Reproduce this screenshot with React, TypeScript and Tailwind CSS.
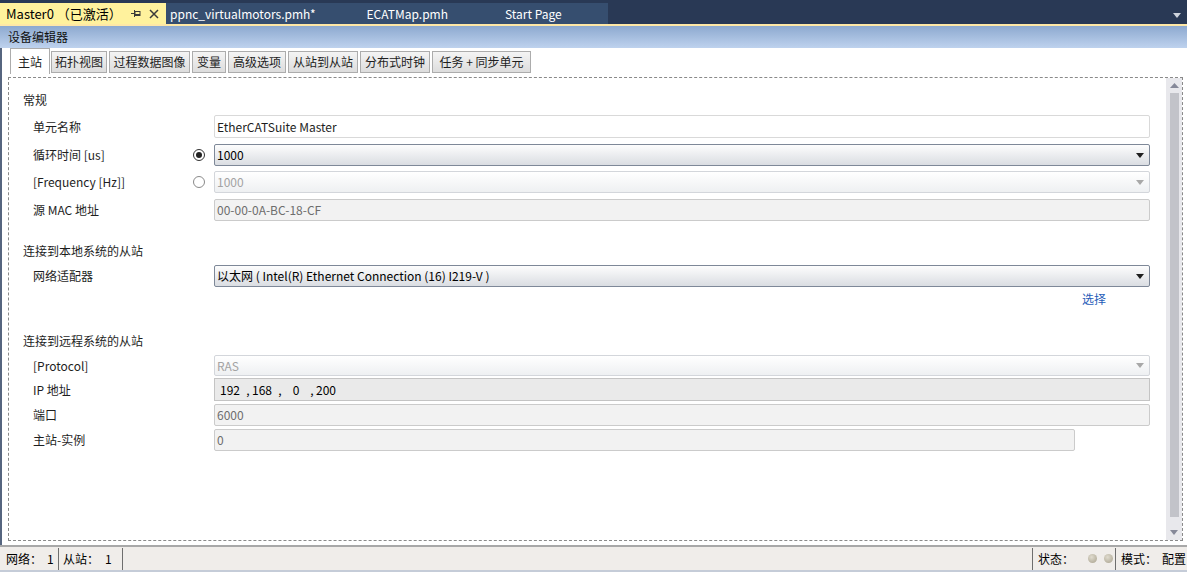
import React from 'react';

const Tri = ({ color = '#1f1f1f' }: { color?: string }) => (
  <svg width="8" height="5" viewBox="0 0 8 5">
    <path d="M0 0H8L4 5Z" fill={color} />
  </svg>
);

function Radio({ checked }: { checked: boolean }) {
  return (
    <div
      className={
        checked
          ? 'w-[12px] h-[12px] rounded-full border border-[#333333] bg-white flex items-center justify-center'
          : 'w-[12px] h-[12px] rounded-full border border-[#8a8a8a] bg-white'
      }
    >
      {checked && <div className="w-[6px] h-[6px] rounded-full bg-[#222222]" />}
    </div>
  );
}

function Label({ children }: { children: React.ReactNode }) {
  return <div className="w-[170px] pl-[10px] flex items-center leading-none">{children}</div>;
}

const tabs: { t: string; w: string; ml: string }[] = [
  { t: '拓扑视图', w: 'w-[56px]', ml: 'ml-[1px]' },
  { t: '过程数据图像', w: 'w-[81px]', ml: 'ml-[2px]' },
  { t: '变量', w: 'w-[34px]', ml: 'ml-[2px]' },
  { t: '高级选项', w: 'w-[58px]', ml: 'ml-[2px]' },
  { t: '从站到从站', w: 'w-[70px]', ml: 'ml-[2px]' },
  { t: '分布式时钟', w: 'w-[70px]', ml: 'ml-[2px]' },
  { t: '任务 + 同步单元', w: 'w-[99px]', ml: 'ml-[2px]' },
];

export default function App() {
  return (
    <div className="w-[1187px] h-[572px] flex flex-col overflow-hidden bg-[#293955] font-['Noto_Sans_CJK_SC','Noto_Sans',sans-serif] text-[12px] text-[#1e1e1e]">
      {/* document tab bar */}
      <div className="h-[24px] flex items-end relative">
        <div className="h-[21px] w-[166px] bg-[#FFF29D] flex items-center pl-[6px] text-[13px] text-[#000000] leading-none">
          <span>Master0 （已激活）</span>
          <svg className="ml-[9px]" width="10" height="9" viewBox="0 0 10 9">
            <path d="M0 4.5H3M3.5 1V8" stroke="#3a3a3a" strokeWidth="1" fill="none" />
            <rect x="4" y="2.5" width="5" height="4" fill="none" stroke="#3a3a3a" strokeWidth="1" />
            <path d="M4 5.5H9" stroke="#3a3a3a" strokeWidth="1" />
          </svg>
          <svg className="ml-[8px]" width="10" height="10" viewBox="0 0 10 10">
            <path d="M1 1L9 9M9 1L1 9" stroke="#3a3a3a" strokeWidth="1.5" />
          </svg>
        </div>
        <div className="h-[21px] w-[442px] bg-[#364E6F] flex items-center text-[12px] text-white leading-none">
          <span className="ml-[4px]">ppnc_virtualmotors.pmh*</span>
          <span className="ml-[51px]">ECATMap.pmh</span>
          <span className="ml-[57px]">Start Page</span>
        </div>
        <div className="flex-1" />
        <div className="absolute right-[6px] top-[13px]">
          <Tri color="#CED4DD" />
        </div>
      </div>
      <div className="h-[2px] bg-[#FFE8A6]" />
      {/* editor header */}
      <div className="h-[22px] bg-linear-to-b from-[#8DA9CF] to-[#BED2EE] flex items-center pl-[8px] leading-none text-[#111111]">
        设备编辑器
      </div>
      {/* content */}
      <div className="flex-1 bg-white border-l-[2px] border-[#56657F] pl-[6px] pr-[4px] flex flex-col">
        {/* tabs */}
        <div className="h-[26px] flex items-start pl-[2px]">
          <div className="w-[40px] h-[26px] bg-white border border-b-0 border-[#ACACAC] flex items-center justify-center leading-none">
            主站
          </div>
          {tabs.map((tb) => (
            <div
              key={tb.t}
              className={`${tb.w} ${tb.ml} mt-[3px] h-[22px] bg-linear-to-b from-[#F4F4F4] to-[#DDDDDD] border border-[#ACACAC] flex items-center justify-center leading-none`}
            >
              {tb.t}
            </div>
          ))}
        </div>
        {/* dashed panel */}
        <div className="mt-[3px] h-[464px] border border-dashed border-[#8A8A8A] flex">
          <div className="flex-1 flex flex-col pl-[14px] pr-[16px]">
            <div className="mt-[12px] h-[20px] flex items-center leading-none">常规</div>

            <div className="mt-[5px] h-[23px] flex">
              <Label>单元名称</Label>
              <div className="w-[21px]" />
              <div className="flex-1 border border-[#D9D9D9] rounded-[2px] bg-white flex items-center pl-[2px] leading-none">
                EtherCATSuite Master
              </div>
            </div>

            <div className="mt-[6px] h-[22px] flex">
              <Label>循环时间 [us]</Label>
              <div className="w-[21px] flex items-center">
                <Radio checked />
              </div>
              <div className="flex-1 border border-[#7E8898] rounded-[2px] bg-linear-to-b from-[#FDFDFD] to-[#DADDE2] flex items-center pl-[2px] pr-[5px] leading-none text-[#000000]">
                <span className="flex-1">1000</span>
                <Tri />
              </div>
            </div>

            <div className="mt-[5px] h-[22px] flex">
              <Label>[Frequency [Hz]]</Label>
              <div className="w-[21px] flex items-center">
                <Radio checked={false} />
              </div>
              <div className="flex-1 border border-[#D3D6DB] rounded-[2px] bg-linear-to-b from-[#FFFFFF] to-[#EEF0F2] flex items-center pl-[2px] pr-[5px] leading-none text-[#A3A3A3]">
                <span className="flex-1">1000</span>
                <Tri color="#A8A8A8" />
              </div>
            </div>

            <div className="mt-[6px] h-[22px] flex">
              <Label>源 MAC 地址</Label>
              <div className="w-[21px]" />
              <div className="flex-1 border border-[#CBCBCB] rounded-[2px] bg-[#F2F2F2] flex items-center pl-[2px] leading-none text-[#6D6D6D]">
                00-00-0A-BC-18-CF
              </div>
            </div>

            <div className="mt-[20px] h-[20px] flex items-center leading-none">连接到本地系统的从站</div>

            <div className="mt-[4px] h-[22px] flex">
              <Label>网络适配器</Label>
              <div className="w-[21px]" />
              <div className="flex-1 border border-[#7E8898] rounded-[2px] bg-linear-to-b from-[#FDFDFD] to-[#DADDE2] flex items-center pl-[2px] pr-[5px] leading-none text-[#000000]">
                <span className="flex-1">以太网 ( Intel(R) Ethernet Connection (16) I219-V )</span>
                <Tri />
              </div>
            </div>

            <div className="mt-[2px] h-[20px] flex justify-end pr-[44px] items-center leading-none text-[#1F5CB8]">
              选择
            </div>

            <div className="mt-[22px] h-[20px] flex items-center leading-none">连接到远程系统的从站</div>

            <div className="mt-[4px] h-[21px] flex">
              <Label>[Protocol]</Label>
              <div className="w-[21px]" />
              <div className="flex-1 border border-[#D3D6DB] rounded-[2px] bg-linear-to-b from-[#FFFFFF] to-[#EEF0F2] flex items-center pl-[2px] pr-[5px] leading-none text-[#A3A3A3]">
                <span className="flex-1">RAS</span>
                <Tri color="#A8A8A8" />
              </div>
            </div>

            <div className="mt-[2px] h-[23px] flex">
              <Label>IP 地址</Label>
              <div className="w-[21px]" />
              <div className="flex-1 border border-[#C4C4C4] bg-[#EAEAEA] flex items-center pl-[5px] leading-none text-[#000000]">
                <span className="w-[24px]">192</span>
                <span className="w-[8px] text-center">,</span>
                <span className="w-[24px]">168</span>
                <span className="w-[8px] text-center">,</span>
                <span className="w-[24px] text-center">0</span>
                <span className="w-[8px] text-center">,</span>
                <span className="w-[24px]">200</span>
              </div>
            </div>

            <div className="mt-[3px] h-[22px] flex">
              <Label>端口</Label>
              <div className="w-[21px]" />
              <div className="flex-1 border border-[#CBCBCB] rounded-[2px] bg-[#F2F2F2] flex items-center pl-[2px] leading-none text-[#6D6D6D]">
                6000
              </div>
            </div>

            <div className="mt-[3px] h-[22px] flex">
              <Label>主站-实例</Label>
              <div className="w-[21px]" />
              <div className="w-[861px] border border-[#CBCBCB] rounded-[2px] bg-[#F2F2F2] flex items-center pl-[2px] leading-none text-[#6D6D6D]">
                0
              </div>
            </div>
          </div>
          {/* scrollbar */}
          <div className="w-[16px] bg-[#E8E8EC] flex flex-col items-center">
            <div className="h-[15px] flex items-center">
              <svg width="9" height="5" viewBox="0 0 9 5">
                <path d="M0 5H9L4.5 0Z" fill="#868999" />
              </svg>
            </div>
            <div className="w-[9px] h-[424px] bg-[#C2C3C9]" />
            <div className="flex-1" />
            <div className="h-[15px] flex items-center">
              <Tri color="#868999" />
            </div>
          </div>
        </div>
        <div className="flex-1" />
      </div>
      {/* status bar */}
      <div className="h-[27px] bg-[#F0EDEA] border-t-[2px] border-[#A8A8A8] border-b-[2px] border-b-[#C5CCD8] flex items-center leading-none text-[#000000] whitespace-nowrap">
        <div className="w-[58px] shrink-0 pl-[6px] flex">
          <span>网络：</span>
          <span className="ml-[5px]">1</span>
        </div>
        <div className="w-[1px] shrink-0 h-[22px] bg-[#6E6E6E]" />
        <div className="w-[63px] shrink-0 pl-[4px] flex">
          <span>从站：</span>
          <span className="ml-[6px]">1</span>
        </div>
        <div className="w-[1px] shrink-0 h-[22px] bg-[#6E6E6E]" />
        <div className="flex-1" />
        <div className="w-[1px] shrink-0 h-[22px] bg-[#6E6E6E]" />
        <div className="w-[82px] shrink-0 pl-[5px] flex items-center">
          <span>状态：</span>
          <span className="ml-[14px] w-[9px] h-[9px] rounded-full bg-[radial-gradient(circle_at_40%_35%,#E0DCCF,#A7A08C)]" />
          <span className="ml-[7px] w-[9px] h-[9px] rounded-full bg-[radial-gradient(circle_at_40%_35%,#E0DCCF,#A7A08C)]" />
        </div>
        <div className="w-[1px] shrink-0 h-[22px] bg-[#6E6E6E]" />
        <div className="w-[71px] shrink-0 pl-[5px] flex">
          <span>模式：</span>
          <span className="ml-[5px]">配置</span>
        </div>
      </div>
    </div>
  );
}
